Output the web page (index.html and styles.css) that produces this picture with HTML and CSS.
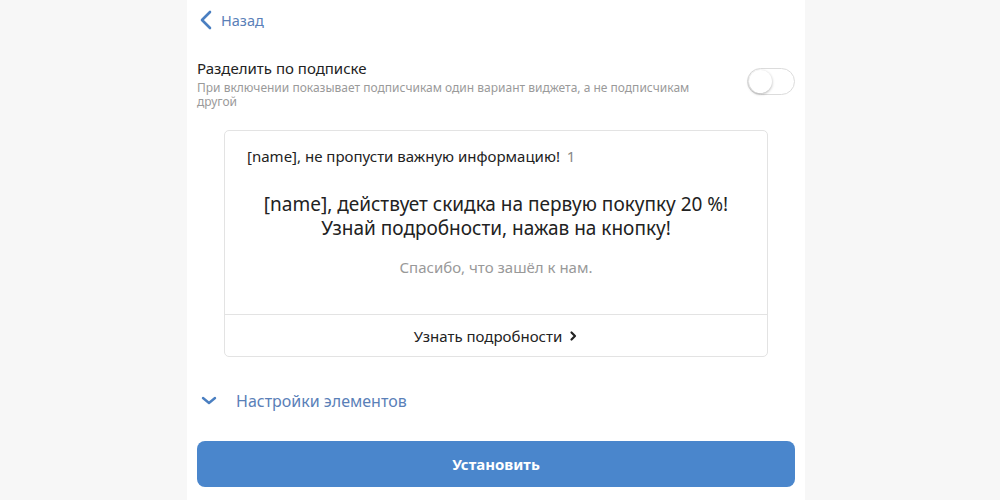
FILE: index.html
```html
<!DOCTYPE html>
<html lang="ru">
<head>
<meta charset="UTF-8">
<title>Виджет</title>
<link rel="stylesheet" href="styles.css">
</head>
<body>

<div class="panel">
    <a class="back" href="#">
        <svg width="14" height="20" viewBox="0 0 14 20"><path d="M11 2 L3 10 L11 18" fill="none" stroke="#4a7fc1" stroke-width="2.6" stroke-linecap="round" stroke-linejoin="round"/></svg>
        <span>Назад</span>
    </a>

    <div class="option">
        <div class="option-text">
            <div class="option-title">Разделить по подписке</div>
            <div class="option-desc">При включении показывает подписчикам один вариант виджета, а не подписчикам другой</div>
        </div>
        <div class="toggle"><div class="knob"></div></div>
    </div>

    <div class="card">
        <div class="card-head">[name], не пропусти важную информацию! <span class="count">1</span></div>
        <div class="card-main">[name], действует скидка на первую покупку 20&nbsp;%!<br>Узнай подробности, нажав на кнопку!</div>
        <div class="card-note">Спасибо, что зашёл к нам.</div>
        <div class="card-btn">
            Узнать подробности
            <svg width="10" height="12" viewBox="0 0 10 12"><path d="M3.5 2.5 L7 6 L3.5 9.5" fill="none" stroke="#222" stroke-width="2.2" stroke-linecap="round" stroke-linejoin="round"/></svg>
        </div>
    </div>

    <div class="settings">
        <svg width="16" height="10" viewBox="0 0 16 10"><path d="M2 2 L8 7 L14 2" fill="none" stroke="#4a7fc1" stroke-width="2.4" stroke-linecap="round" stroke-linejoin="round"/></svg>
        <span>Настройки элементов</span>
    </div>

    <button class="install">Установить</button>
</div>

</body>
</html>
```

FILE: styles.css
```css
body {
    margin: 0;
    background-color: #f7f7f7;
    font-family: "Noto Sans", "Open Sans", sans-serif;
    color: #222;
}

.panel {
    width: 598px;
    margin-left: 187px;
    padding: 0 10px;
    background-color: #fff;
    height: 500px;
}

.back {
    display: flex;
    align-items: center;
    gap: 8px;
    height: 40px;
    padding-left: 2px;
    text-decoration: none;
    color: #5a80b8;
    font-size: 14.5px;
}

.option {
    display: flex;
    align-items: center;
    justify-content: space-between;
    margin-top: 18px;
}

.option-text {
    width: 530px;
}

.option-title {
    font-size: 15px;
    line-height: 20px;
}

.option-desc {
    font-size: 12px;
    line-height: 14px;
    color: #9a9a9a;
    margin-top: 3px;
    width: 520px;
}

.toggle {
    width: 48px;
    height: 27px;
    border: 1px solid #dcdcdc;
    border-radius: 15px;
    box-sizing: border-box;
    position: relative;
    margin-top: -4px;
}

.knob {
    position: absolute;
    left: 1px;
    top: 1px;
    width: 23px;
    height: 23px;
    border-radius: 50%;
    background: #fff;
    box-shadow: 0 1px 3px rgba(0, 0, 0, 0.3);
}

.card {
    width: 544px;
    margin: 21px 0 0 27px;
    border: 1px solid #e3e3e3;
    border-radius: 5px;
    box-sizing: border-box;
}

.card-head {
    font-size: 15px;
    padding: 14px 22px 0;
    line-height: 22px;
}

.count {
    color: #888;
    margin-left: 3px;
}

.card-main {
    text-align: center;
    font-size: 19px;
    line-height: 24px;
    margin-top: 25px;
}

.card-note {
    text-align: center;
    font-size: 15px;
    color: #999;
    margin-top: 17px;
    line-height: 20px;
    padding-bottom: 37px;
}

.card-btn {
    border-top: 1px solid #e3e3e3;
    height: 41px;
    display: flex;
    align-items: center;
    justify-content: center;
    gap: 6px;
    font-size: 15px;
}

.settings {
    display: flex;
    align-items: center;
    gap: 19px;
    color: #5a80b8;
    font-size: 16px;
    margin-top: 33px;
    padding-left: 4px;
}

.install {
    display: block;
    width: 100%;
    height: 46px;
    margin-top: 29px;
    border: none;
    border-radius: 8px;
    background-color: #4a86cc;
    color: #fff;
    font-family: inherit;
    font-size: 15px;
    font-weight: bold;
}
```
